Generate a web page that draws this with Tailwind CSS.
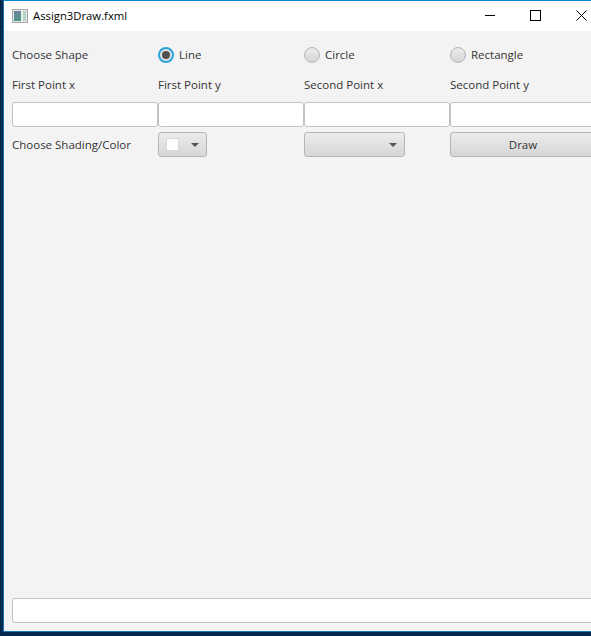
<!DOCTYPE html>
<html>
<head>
<meta charset="utf-8">
<script src="https://cdn.jsdelivr.net/npm/@tailwindcss/browser@4"></script>
</head>
<body class="m-0 overflow-hidden">
<div class="w-[591px] h-[636px] overflow-hidden bg-[#04294f] pl-[3px] pb-[4px] font-['Open_Sans',sans-serif] text-[11.5px] text-[#333333]">
  <div class="h-full flex flex-col border-t border-t-[#1185d6] border-l border-l-[#1a6fae] border-b border-b-[#1a78bd]">
    <header class="h-[30px] shrink-0 bg-white flex items-center relative text-black">
      <svg class="ml-[8px] w-[16px] h-[14px]" viewBox="0 0 16 14">
        <defs><linearGradient id="g" x1="0" y1="0" x2="0" y2="1"><stop offset="0" stop-color="#6f7f9c"/><stop offset="1" stop-color="#4f9a8c"/></linearGradient></defs>
        <rect x="0.5" y="0.5" width="15" height="13" fill="#e4e4e4" stroke="#a8a8a8"/>
        <rect x="2" y="2" width="7" height="10" fill="url(#g)"/>
        <rect x="9" y="2" width="2" height="10" fill="#e6f2e8"/>
        <rect x="11" y="2" width="3" height="10" fill="#b4d4c0"/>
      </svg>
      <span class="ml-[5px] text-[11.3px] leading-none">Assign3Draw.fxml</span>
      <div class="absolute left-[481px] top-[14px] w-[10px] h-px bg-black"></div>
      <div class="absolute left-[526px] top-[9px] w-[11px] h-[11px] border border-black"></div>
      <svg class="absolute left-[572px] top-[9px] w-[11px] h-[11px]" viewBox="0 0 11 11"><path d="M0.5 0.5L10.5 10.5M10.5 0.5L0.5 10.5" stroke="#000" stroke-width="1"/></svg>
    </header>
    <main class="flex-1 bg-[#f3f3f3] flex flex-col pl-[8px] pt-[9px] pb-[8px] overflow-hidden">
      <div class="grid grid-cols-[146px_146px_146px_146px] w-[584px] shrink-0">
        <div class="h-[30px] flex items-center">Choose Shape</div>
        <label class="h-[30px] flex items-center gap-[5px]">
          <span class="w-[16px] h-[16px] rounded-full bg-[#e4e4e4] border-2 border-[#2aa5dc] flex items-center justify-center"><span class="w-[8px] h-[8px] rounded-full bg-[#515151]"></span></span>
          Line
        </label>
        <label class="h-[30px] flex items-center gap-[5px]">
          <span class="w-[16px] h-[16px] rounded-full bg-gradient-to-b from-[#ececec] to-[#d6d6d6] border border-[#b5b5b5]"></span>
          Circle
        </label>
        <label class="h-[30px] flex items-center gap-[5px]">
          <span class="w-[16px] h-[16px] rounded-full bg-gradient-to-b from-[#ececec] to-[#d6d6d6] border border-[#b5b5b5]"></span>
          Rectangle
        </label>

        <div class="h-[30px] flex items-center">First Point x</div>
        <div class="h-[30px] flex items-center">First Point y</div>
        <div class="h-[30px] flex items-center">Second Point x</div>
        <div class="h-[30px] flex items-center">Second Point y</div>
      </div>
      <div class="grid grid-cols-[146px_146px_146px_146px] w-[584px] shrink-0 mt-[2px]">
        <input class="h-[25px] w-full bg-white border border-[#c2c2c2] rounded-[3px]">
        <input class="h-[25px] w-full bg-white border border-[#c2c2c2] rounded-[3px]">
        <input class="h-[25px] w-full bg-white border border-[#c2c2c2] rounded-[3px]">
        <input class="h-[25px] w-full bg-white border border-[#c2c2c2] rounded-[3px]">
      </div>
      <div class="grid grid-cols-[146px_146px_146px_146px] w-[584px] shrink-0 mt-[5px]">
        <div class="h-[25px] flex items-center">Choose Shading/Color</div>
        <div class="w-[49px] h-[25px] rounded-[3px] border border-[#b5b5b5] bg-gradient-to-b from-[#ececec] to-[#d6d6d6] flex items-center pl-[7px]">
          <span class="w-[13px] h-[13px] bg-white border border-[#d8d8d8]"></span>
          <span class="ml-[12px] w-0 h-0 border-x-[4px] border-x-transparent border-t-[4px] border-t-[#555555]"></span>
        </div>
        <div class="w-[101px] h-[25px] rounded-[3px] border border-[#b5b5b5] bg-gradient-to-b from-[#ececec] to-[#d6d6d6] flex items-center justify-end pr-[7px]">
          <span class="w-0 h-0 border-x-[4px] border-x-transparent border-t-[4px] border-t-[#555555]"></span>
        </div>
        <button class="w-[146px] h-[25px] rounded-[3px] border border-[#b5b5b5] bg-gradient-to-b from-[#ececec] to-[#d6d6d6] flex items-center justify-center">Draw</button>
      </div>
      <div class="flex-1"></div>
      <input class="h-[25px] w-[584px] shrink-0 bg-white border border-[#c2c2c2] rounded-[3px]">
    </main>
  </div>
</div>
</body>
</html>
